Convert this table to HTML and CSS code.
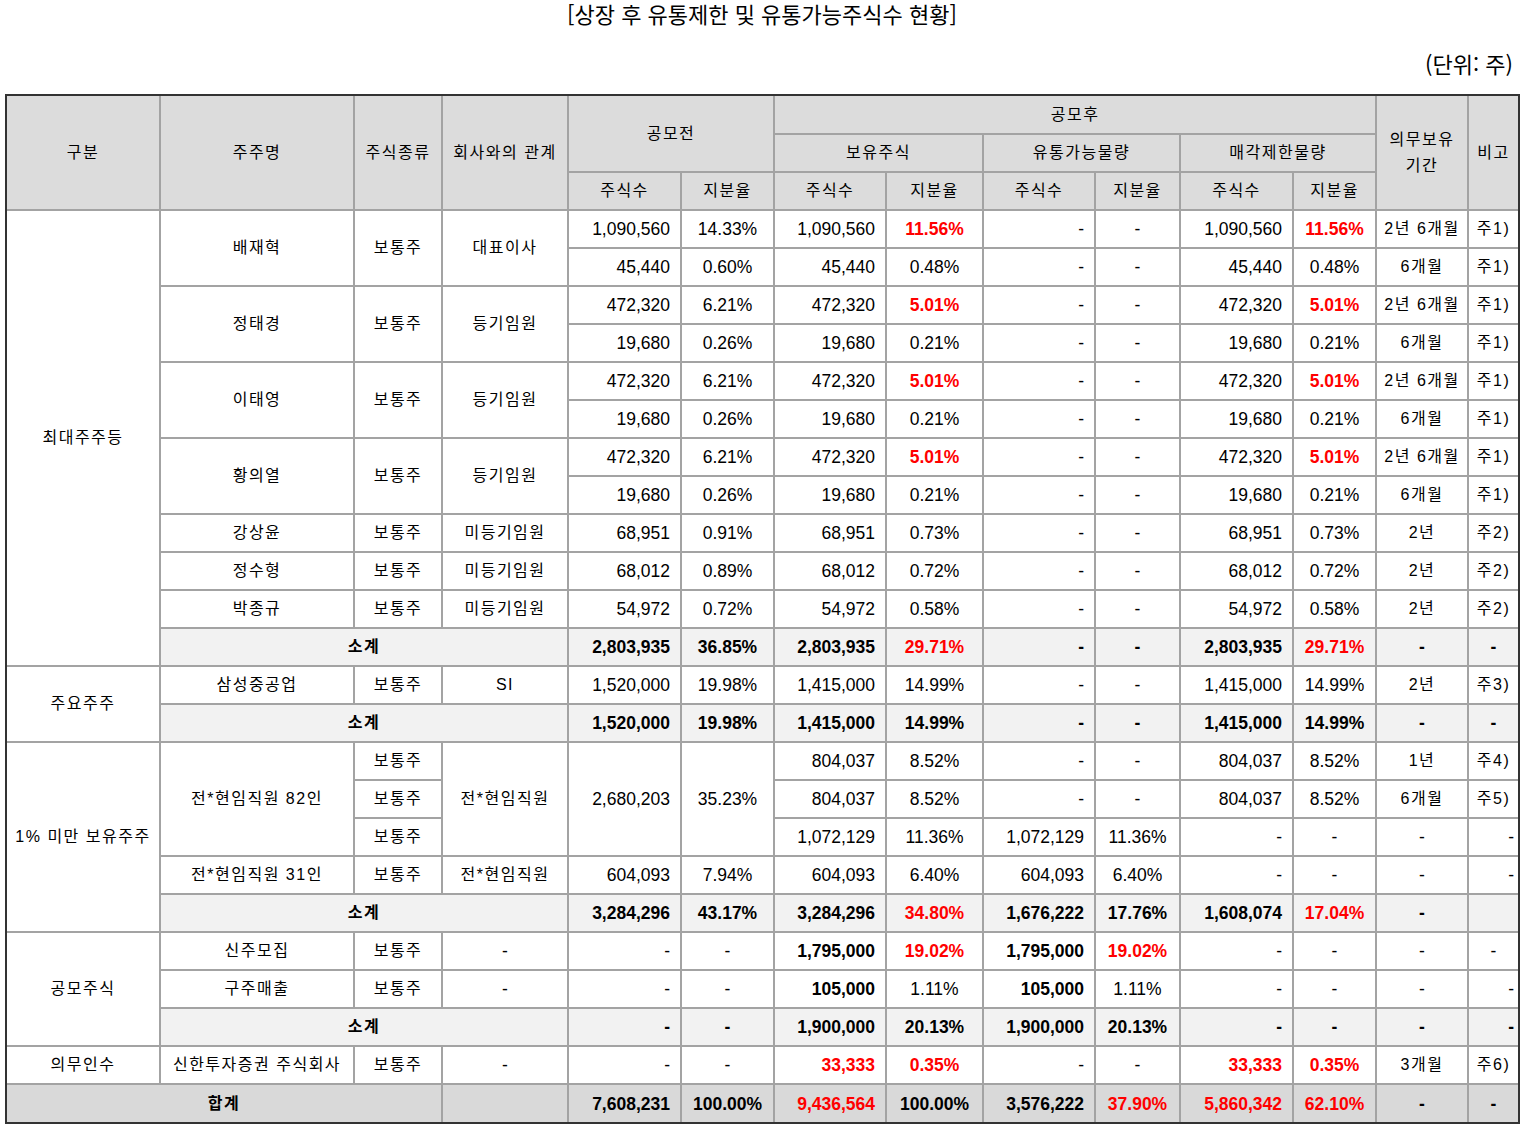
FILE: index.html
```html
<!DOCTYPE html>
<html lang="ko">
<head>
<meta charset="utf-8">
<title>상장 후 유통제한 및 유통가능주식수 현황</title>
<link rel="stylesheet" href="styles.css">
</head>
<body>
<h1 class="title">[상장 후 유통제한 및 유통가능주식수 현황]</h1>
<p class="unit">(단위: 주)</p>
<div class="frame">
<table>
<colgroup>
<col class="c1"><col class="c2"><col class="c3"><col class="c4"><col class="c5"><col class="c6"><col class="c7"><col class="c8"><col class="c9"><col class="c10"><col class="c11"><col class="c12"><col class="c13"><col class="c14">
</colgroup>
<thead>
<tr>
<th rowspan="3">구분</th><th rowspan="3">주주명</th><th rowspan="3">주식종류</th><th rowspan="3">회사와의 관계</th>
<th colspan="2" rowspan="2">공모전</th><th colspan="6">공모후</th>
<th rowspan="3">의무보유<br>기간</th><th rowspan="3">비고</th>
</tr>
<tr><th colspan="2">보유주식</th><th colspan="2">유통가능물량</th><th colspan="2">매각제한물량</th></tr>
<tr><th>주식수</th><th>지분율</th><th>주식수</th><th>지분율</th><th>주식수</th><th>지분율</th><th>주식수</th><th>지분율</th></tr>
</thead>
<tbody>
<tr>
<td rowspan="12">최대주주등</td><td rowspan="2">배재혁</td><td rowspan="2">보통주</td><td rowspan="2">대표이사</td>
<td class="n">1,090,560</td><td class="p">14.33%</td><td class="n">1,090,560</td><td class="p r">11.56%</td><td class="n">-</td><td class="p">-</td><td class="n">1,090,560</td><td class="p r">11.56%</td><td>2년 6개월</td><td>주1)</td>
</tr>
<tr>
<td class="n">45,440</td><td class="p">0.60%</td><td class="n">45,440</td><td class="p">0.48%</td><td class="n">-</td><td class="p">-</td><td class="n">45,440</td><td class="p">0.48%</td><td>6개월</td><td>주1)</td>
</tr>
<tr>
<td rowspan="2">정태경</td><td rowspan="2">보통주</td><td rowspan="2">등기임원</td>
<td class="n">472,320</td><td class="p">6.21%</td><td class="n">472,320</td><td class="p r">5.01%</td><td class="n">-</td><td class="p">-</td><td class="n">472,320</td><td class="p r">5.01%</td><td>2년 6개월</td><td>주1)</td>
</tr>
<tr>
<td class="n">19,680</td><td class="p">0.26%</td><td class="n">19,680</td><td class="p">0.21%</td><td class="n">-</td><td class="p">-</td><td class="n">19,680</td><td class="p">0.21%</td><td>6개월</td><td>주1)</td>
</tr>
<tr>
<td rowspan="2">이태영</td><td rowspan="2">보통주</td><td rowspan="2">등기임원</td>
<td class="n">472,320</td><td class="p">6.21%</td><td class="n">472,320</td><td class="p r">5.01%</td><td class="n">-</td><td class="p">-</td><td class="n">472,320</td><td class="p r">5.01%</td><td>2년 6개월</td><td>주1)</td>
</tr>
<tr>
<td class="n">19,680</td><td class="p">0.26%</td><td class="n">19,680</td><td class="p">0.21%</td><td class="n">-</td><td class="p">-</td><td class="n">19,680</td><td class="p">0.21%</td><td>6개월</td><td>주1)</td>
</tr>
<tr>
<td rowspan="2">황의열</td><td rowspan="2">보통주</td><td rowspan="2">등기임원</td>
<td class="n">472,320</td><td class="p">6.21%</td><td class="n">472,320</td><td class="p r">5.01%</td><td class="n">-</td><td class="p">-</td><td class="n">472,320</td><td class="p r">5.01%</td><td>2년 6개월</td><td>주1)</td>
</tr>
<tr>
<td class="n">19,680</td><td class="p">0.26%</td><td class="n">19,680</td><td class="p">0.21%</td><td class="n">-</td><td class="p">-</td><td class="n">19,680</td><td class="p">0.21%</td><td>6개월</td><td>주1)</td>
</tr>
<tr>
<td>강상윤</td><td>보통주</td><td>미등기임원</td>
<td class="n">68,951</td><td class="p">0.91%</td><td class="n">68,951</td><td class="p">0.73%</td><td class="n">-</td><td class="p">-</td><td class="n">68,951</td><td class="p">0.73%</td><td>2년</td><td>주2)</td>
</tr>
<tr>
<td>정수형</td><td>보통주</td><td>미등기임원</td>
<td class="n">68,012</td><td class="p">0.89%</td><td class="n">68,012</td><td class="p">0.72%</td><td class="n">-</td><td class="p">-</td><td class="n">68,012</td><td class="p">0.72%</td><td>2년</td><td>주2)</td>
</tr>
<tr>
<td>박종규</td><td>보통주</td><td>미등기임원</td>
<td class="n">54,972</td><td class="p">0.72%</td><td class="n">54,972</td><td class="p">0.58%</td><td class="n">-</td><td class="p">-</td><td class="n">54,972</td><td class="p">0.58%</td><td>2년</td><td>주2)</td>
</tr>
<tr class="sub">
<td colspan="3">소계</td>
<td class="n">2,803,935</td><td class="p">36.85%</td><td class="n">2,803,935</td><td class="p r">29.71%</td><td class="n">-</td><td class="p">-</td><td class="n">2,803,935</td><td class="p r">29.71%</td><td class="p">-</td><td class="p">-</td>
</tr>
<tr>
<td rowspan="2">주요주주</td><td>삼성중공업</td><td>보통주</td><td>SI</td>
<td class="n">1,520,000</td><td class="p">19.98%</td><td class="n">1,415,000</td><td class="p">14.99%</td><td class="n">-</td><td class="p">-</td><td class="n">1,415,000</td><td class="p">14.99%</td><td>2년</td><td>주3)</td>
</tr>
<tr class="sub">
<td colspan="3">소계</td>
<td class="n">1,520,000</td><td class="p">19.98%</td><td class="n">1,415,000</td><td class="p">14.99%</td><td class="n">-</td><td class="p">-</td><td class="n">1,415,000</td><td class="p">14.99%</td><td class="p">-</td><td class="p">-</td>
</tr>
<tr>
<td rowspan="5">1% 미만 보유주주</td><td rowspan="3">전*현임직원 82인</td><td>보통주</td><td rowspan="3">전*현임직원</td>
<td class="n" rowspan="3">2,680,203</td><td class="p" rowspan="3">35.23%</td>
<td class="n">804,037</td><td class="p">8.52%</td><td class="n">-</td><td class="p">-</td><td class="n">804,037</td><td class="p">8.52%</td><td>1년</td><td>주4)</td>
</tr>
<tr>
<td>보통주</td>
<td class="n">804,037</td><td class="p">8.52%</td><td class="n">-</td><td class="p">-</td><td class="n">804,037</td><td class="p">8.52%</td><td>6개월</td><td>주5)</td>
</tr>
<tr>
<td>보통주</td>
<td class="n">1,072,129</td><td class="p">11.36%</td><td class="n">1,072,129</td><td class="p">11.36%</td><td class="n">-</td><td class="p">-</td><td class="p">-</td><td class="p rd">-</td>
</tr>
<tr>
<td>전*현임직원 31인</td><td>보통주</td><td>전*현임직원</td>
<td class="n">604,093</td><td class="p">7.94%</td><td class="n">604,093</td><td class="p">6.40%</td><td class="n">604,093</td><td class="p">6.40%</td><td class="n">-</td><td class="p">-</td><td class="p">-</td><td class="p rd">-</td>
</tr>
<tr class="sub">
<td colspan="3">소계</td>
<td class="n">3,284,296</td><td class="p">43.17%</td><td class="n">3,284,296</td><td class="p r">34.80%</td><td class="n">1,676,222</td><td class="p">17.76%</td><td class="n">1,608,074</td><td class="p r">17.04%</td><td class="p">-</td><td></td>
</tr>
<tr>
<td rowspan="3">공모주식</td><td>신주모집</td><td>보통주</td><td class="p">-</td>
<td class="n">-</td><td class="p">-</td><td class="n b">1,795,000</td><td class="p r">19.02%</td><td class="n b">1,795,000</td><td class="p r">19.02%</td><td class="n">-</td><td class="p">-</td><td class="p">-</td><td class="p">-</td>
</tr>
<tr>
<td>구주매출</td><td>보통주</td><td class="p">-</td>
<td class="n">-</td><td class="p">-</td><td class="n b">105,000</td><td class="p">1.11%</td><td class="n b">105,000</td><td class="p">1.11%</td><td class="n">-</td><td class="p">-</td><td class="p">-</td><td class="p rd">-</td>
</tr>
<tr class="sub">
<td colspan="3">소계</td>
<td class="n">-</td><td class="p">-</td><td class="n">1,900,000</td><td class="p">20.13%</td><td class="n">1,900,000</td><td class="p">20.13%</td><td class="n">-</td><td class="p">-</td><td class="p">-</td><td class="p rd">-</td>
</tr>
<tr>
<td>의무인수</td><td>신한투자증권 주식회사</td><td>보통주</td><td class="p">-</td>
<td class="n">-</td><td class="p">-</td><td class="n r">33,333</td><td class="p r">0.35%</td><td class="n">-</td><td class="p">-</td><td class="n r">33,333</td><td class="p r">0.35%</td><td>3개월</td><td>주6)</td>
</tr>
<tr class="tot">
<td colspan="3">합계</td><td></td>
<td class="n">7,608,231</td><td class="p">100.00%</td><td class="n r">9,436,564</td><td class="p">100.00%</td><td class="n">3,576,222</td><td class="p r">37.90%</td><td class="n r">5,860,342</td><td class="p r">62.10%</td><td class="p">-</td><td class="p">-</td>
</tr>
</tbody>
</table>
</div>
</body>
</html>
```

FILE: styles.css
```css
html, body {
  margin: 0;
  padding: 0;
  background: #ffffff;
  color: #000000;
  font-family: "Noto Sans CJK KR", "Liberation Sans", sans-serif;
}

.title {
  margin: 0;
  height: 26px;
  line-height: 26px;
  font-size: 22px;
  font-weight: 400;
  text-align: center;
}

.unit {
  margin: 24px 0 0;
  height: 26px;
  line-height: 26px;
  font-size: 22px;
  text-align: right;
  padding-right: 11px;
}

.frame {
  margin: 18px 0 0 5px;
  width: 1515px;
  box-sizing: border-box;
  border: 2px solid #333333;
}

table {
  width: 1511px;
  border-collapse: collapse;
  border-style: hidden;
  table-layout: fixed;
}

.c1 { width: 153px; }
.c2 { width: 194px; }
.c3 { width: 88px; }
.c4 { width: 126px; }
.c5 { width: 113px; }
.c6 { width: 93px; }
.c7 { width: 112px; }
.c8 { width: 97px; }
.c9 { width: 112px; }
.c10 { width: 85px; }
.c11 { width: 113px; }
.c12 { width: 83px; }
.c13 { width: 92px; }
.c14 { width: 50px; }

tr {
  height: 38px;
}

th, td {
  border: 2px solid #a3a3a3;
  padding: 0 2px;
  text-align: center;
  vertical-align: middle;
  white-space: nowrap;
  overflow: hidden;
  font-family: "Liberation Sans", "Noto Sans CJK KR", sans-serif;
  font-size: 16px;
  letter-spacing: 1.5px;
  line-height: 20px;
}

th {
  background: #dcdcdc;
  font-weight: 400;
  line-height: 26px;
}

td.n, td.p {
  font-size: 17.5px;
  letter-spacing: 0;
}

td.n {
  text-align: right;
  padding-right: 10px;
}

td.rd {
  text-align: right;
  padding-right: 4px;
}

td.b {
  font-weight: 700;
}

td.r {
  color: #ff0000;
  font-weight: 700;
}

tr.sub td {
  background: #f2f2f2;
  font-weight: 700;
}

tr.tot td {
  background: #d9d9d9;
  font-weight: 700;
}
```
